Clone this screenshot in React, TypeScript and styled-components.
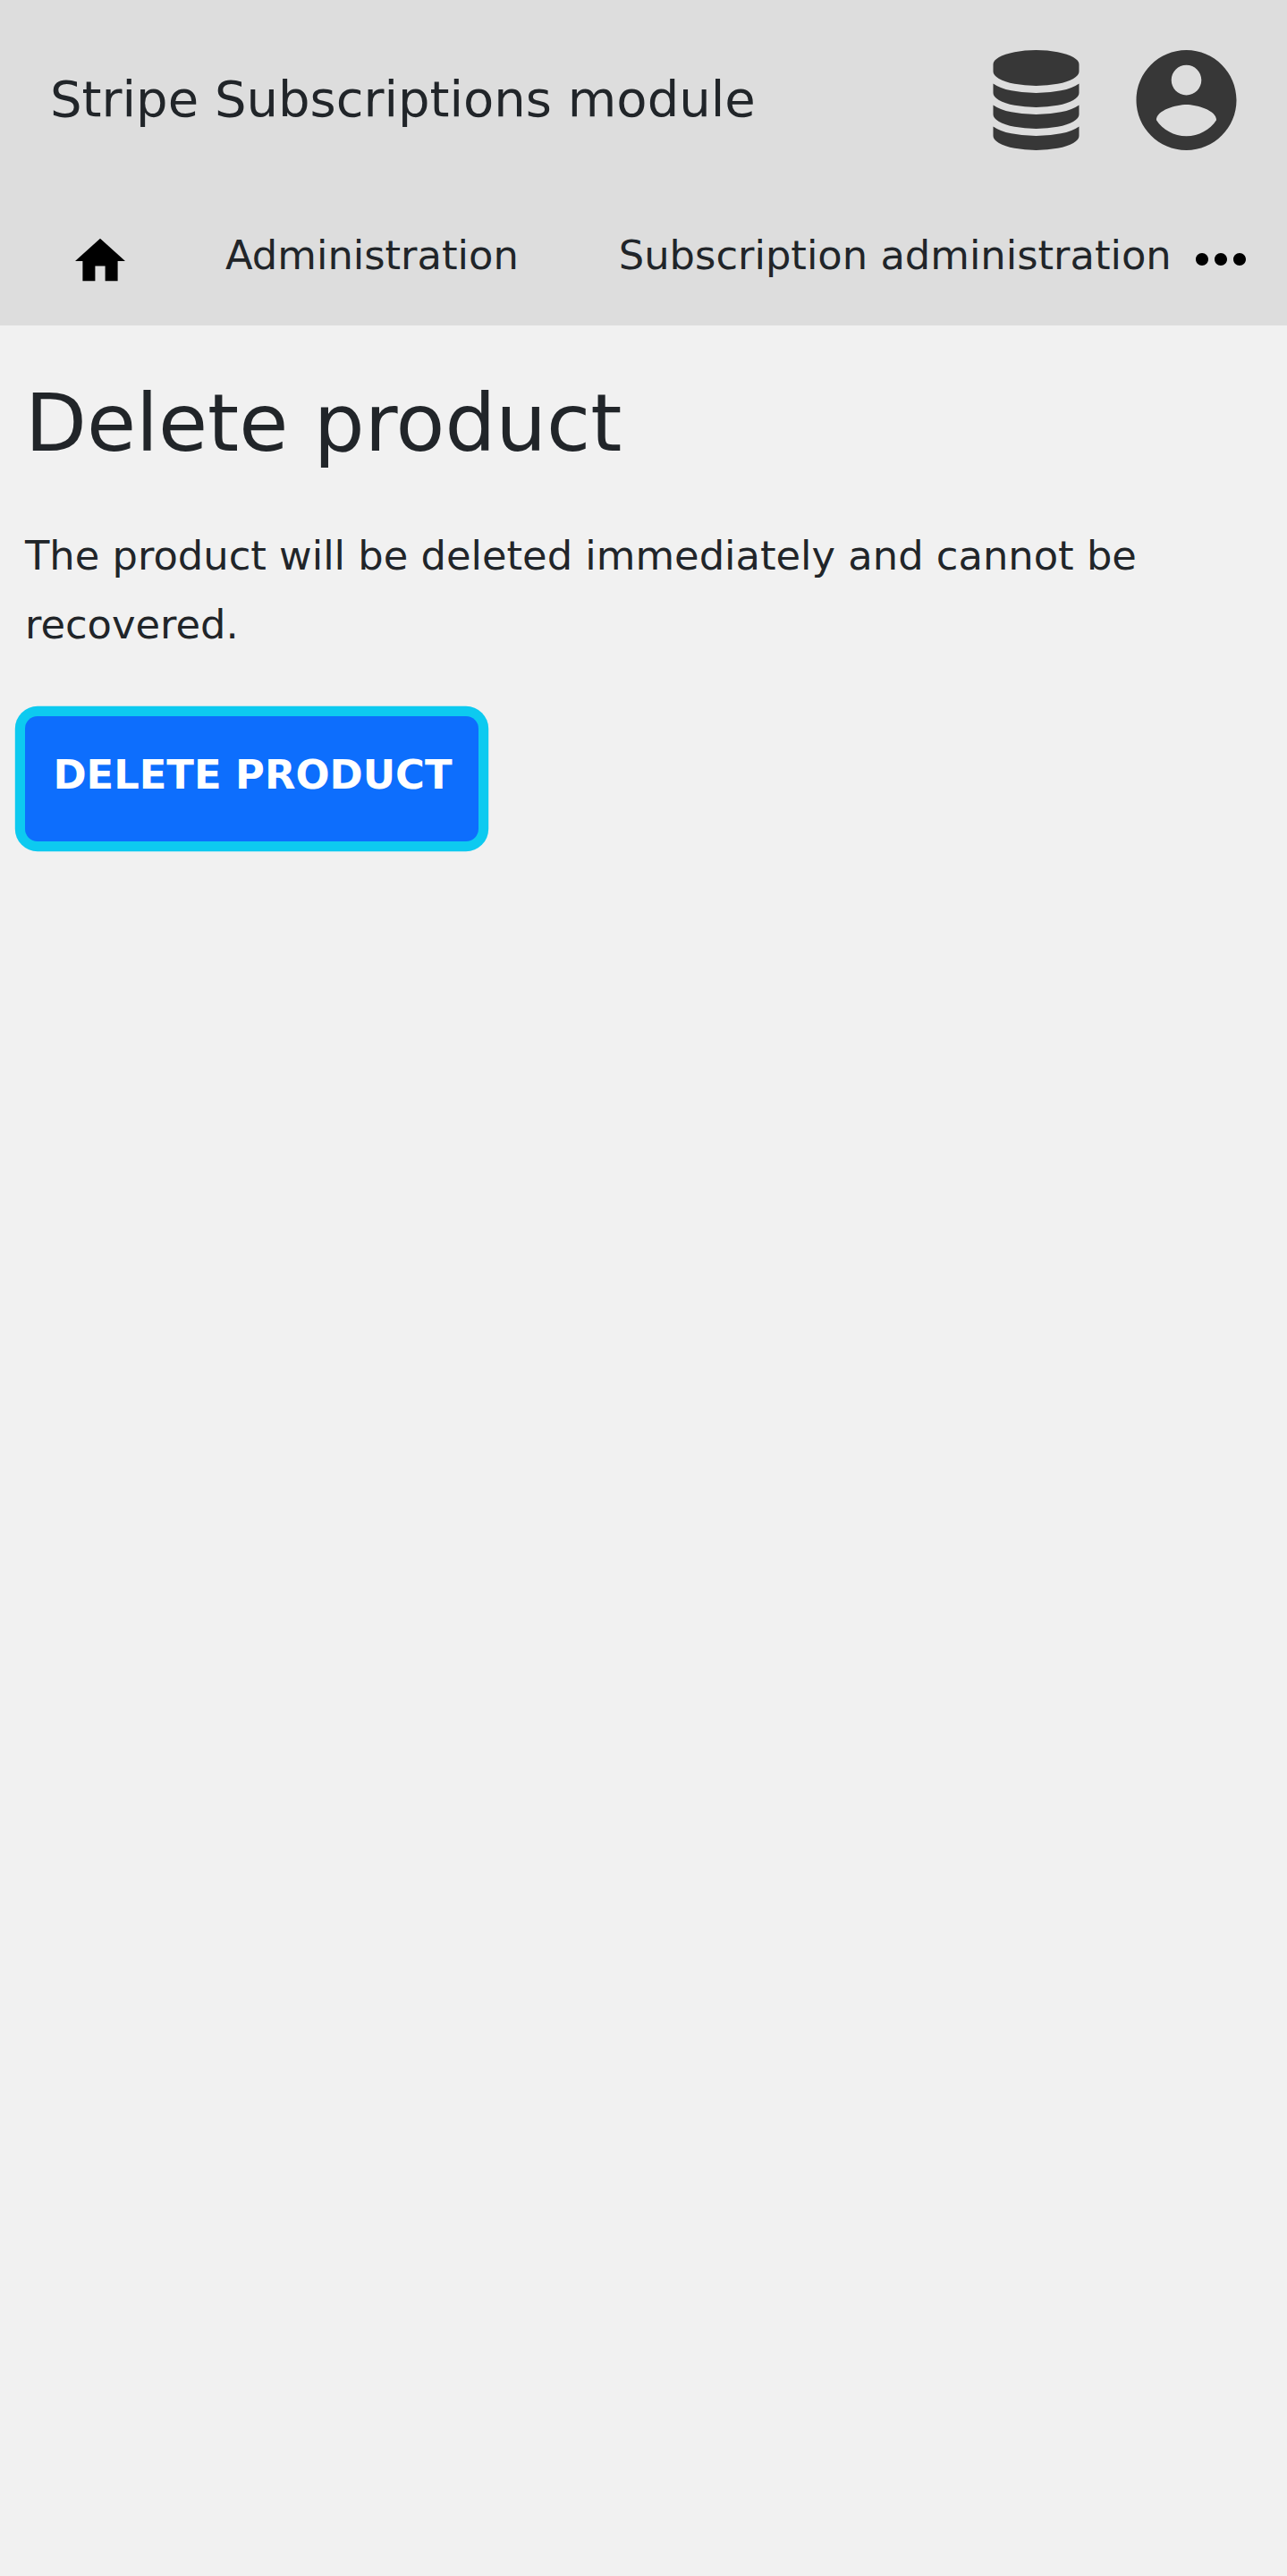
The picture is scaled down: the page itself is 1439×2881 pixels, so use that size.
import React from "react";
import styled, { createGlobalStyle } from "styled-components";

const GlobalStyle = createGlobalStyle`
  *, *::before, *::after { box-sizing: border-box; }
  html, body { margin: 0; padding: 0; background: #f1f1f1; }
  body {
    color: #212529;
    font-family: "DejaVu Sans", sans-serif;
    font-size: 44.8px;
    line-height: 76.8px;
  }
`;

const Page = styled.div`
  min-height: 2881px;
  background: #f1f1f1;
`;

const Header = styled.header`
  display: flex;
  flex-direction: column;
  height: 364px;
  background: #ddd;
`;

const TitleBar = styled.div`
  display: flex;
  align-items: center;
  justify-content: space-between;
  height: 224px;
  padding: 0 56px;
`;

const Title = styled.div`
  font-size: 56px;
  line-height: 83px;
  padding-bottom: 3px;
  white-space: nowrap;
`;

const Actions = styled.div`
  display: flex;
  align-items: center;
  gap: 63px;
`;

const ActionIcon = styled.svg<{ $width: number }>`
  display: block;
  width: ${({ $width }) => $width}px;
  height: 112px;
  fill: #373737;
`;

const Nav = styled.nav`
  display: flex;
  align-items: flex-start;
  height: 140px;
  padding: 24px 46px 0 78px;
  white-space: nowrap;
`;

const HomeLink = styled.a`
  display: block;
  margin: 10px 106px 0 0;
`;

const HomeIcon = styled.svg`
  display: block;
  width: 68px;
  height: 68px;
`;

const NavLink = styled.a`
  color: inherit;
  text-decoration: none;
  margin-right: 112px;

  &:last-of-type { margin-right: 0; }
`;

const MoreIcon = styled.svg`
  display: block;
  width: 56px;
  height: 14px;
  margin: 35px 0 0 auto;
`;

const Main = styled.main`
  padding: 42px 28px 0;
`;

const Heading = styled.h1`
  margin: 0;
  font-size: 89.6px;
  font-weight: 400;
  line-height: 134px;
`;

const Message = styled.p`
  margin: 44px 0 0;
`;

const DeleteButton = styled.button`
  display: block;
  height: 140px;
  margin: 63.8px 0 0;
  padding: 0 30px 8.8px 31.4px;
  border: 0;
  border-radius: 14px;
  background: #0d6efd;
  box-shadow: 0 0 0 11.2px #0dcaf0;
  color: #fff;
  font: bold 44.8px/76px "DejaVu Sans", sans-serif;
  text-transform: uppercase;
  white-space: nowrap;
`;

export default function App() {
  return (
    <Page>
      <GlobalStyle />
      <Header>
        <TitleBar>
          <Title>Stripe Subscriptions module</Title>
          <Actions>
            <ActionIcon $width={97} viewBox="0 0 1536 1792" aria-hidden="true">
              <path d="M768 768q237 0 443-43t325-127v170q0 69-103 128t-280 93.5-385 34.5-385-34.5-280-93.5-103-128v-170q119 84 325 127t443 43zm0 768q237 0 443-43t325-127v170q0 69-103 128t-280 93.5-385 34.5-385-34.5-280-93.5-103-128v-170q119 84 325 127t443 43zm0-384q237 0 443-43t325-127v170q0 69-103 128t-280 93.5-385 34.5-385-34.5-280-93.5-103-128v-170q119 84 325 127t443 43zm0-1152q208 0 385 34.5t280 93.5 103 128v128q0 69-103 128t-280 93.5-385 34.5-385-34.5-280-93.5-103-128v-128q0-69 103-128t280-93.5 385-34.5z" />
            </ActionIcon>
            <ActionIcon $width={113} viewBox="2 2 20 20" aria-hidden="true">
              <path d="M12 2C6.48 2 2 6.48 2 12s4.48 10 10 10 10-4.48 10-10S17.52 2 12 2zm0 3c1.66 0 3 1.34 3 3s-1.34 3-3 3-3-1.34-3-3 1.34-3 3-3zm0 14.2c-2.5 0-4.71-1.28-6-3.22.03-1.99 4-3.08 6-3.08 1.99 0 5.97 1.09 6 3.08-1.29 1.94-3.5 3.22-6 3.22z" />
            </ActionIcon>
          </Actions>
        </TitleBar>
        <Nav>
          <HomeLink>
            <HomeIcon viewBox="-0.143 -0.107 24.2857 24.2857" aria-hidden="true">
              <path d="M10 20v-6h4v6h5v-8h3L12 3 2 12h3v8z" />
            </HomeIcon>
          </HomeLink>
          <NavLink>Administration</NavLink>
          <NavLink>Subscription administration</NavLink>
          <MoreIcon viewBox="4 10 16 4" aria-hidden="true">
            <path d="M6 10c-1.1 0-2 .9-2 2s.9 2 2 2 2-.9 2-2-.9-2-2-2zm12 0c-1.1 0-2 .9-2 2s.9 2 2 2 2-.9 2-2-.9-2-2-2zm-6 0c-1.1 0-2 .9-2 2s.9 2 2 2 2-.9 2-2-.9-2-2-2z" />
          </MoreIcon>
        </Nav>
      </Header>
      <Main>
        <Heading>Delete product</Heading>
        <Message>The product will be deleted immediately and cannot be recovered.</Message>
        <DeleteButton>Delete product</DeleteButton>
      </Main>
    </Page>
  );
}
